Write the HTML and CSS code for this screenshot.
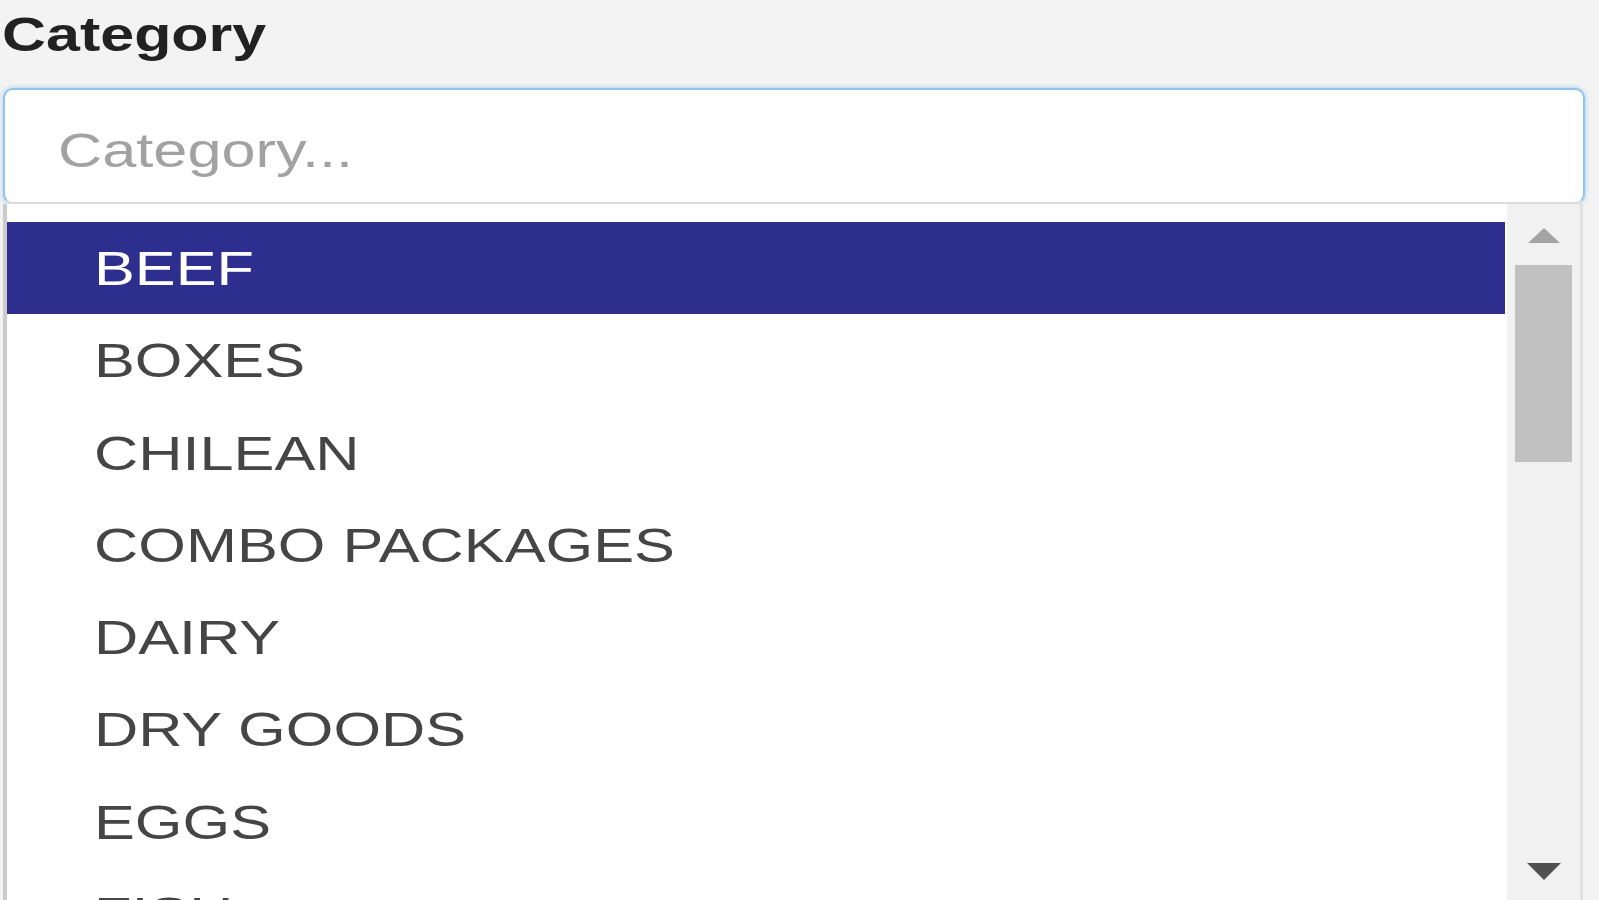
FILE: index.html
```html
<!DOCTYPE html>
<html lang="en">
<head>
<meta charset="utf-8">
<title>Category</title>
<link rel="stylesheet" href="styles.css">
</head>
<body>
<div class="field">
  <div class="label"><span class="stretch-bold">Category</span></div>
  <div class="control"><span class="stretch placeholder">Category...</span></div>
  <div class="dropdown">
    <ul class="options">
      <li class="option active"><span class="stretch">BEEF</span></li>
      <li class="option"><span class="stretch">BOXES</span></li>
      <li class="option"><span class="stretch">CHILEAN</span></li>
      <li class="option"><span class="stretch">COMBO PACKAGES</span></li>
      <li class="option"><span class="stretch">DAIRY</span></li>
      <li class="option"><span class="stretch">DRY GOODS</span></li>
      <li class="option"><span class="stretch">EGGS</span></li>
      <li class="option"><span class="stretch">FISH</span></li>
    </ul>
    <div class="scrollbar">
      <div class="arrow-up"></div>
      <div class="thumb"></div>
      <div class="spacer"></div>
      <div class="arrow-down"></div>
    </div>
  </div>
</div>
</body>
</html>
```

FILE: styles.css
```css
html, body {
  margin: 0;
  padding: 0;
  background: #f3f3f3;
  overflow: hidden;
  height: 900px;
}

.field {
  font-family: "Liberation Sans", Arial, sans-serif;
}

.stretch,
.stretch-bold {
  display: inline-block;
  transform: scaleX(1.25);
  transform-origin: 0 50%;
  white-space: nowrap;
}

.stretch-bold {
  transform: scaleX(1.27);
}

.label {
  font-size: 48px;
  font-weight: bold;
  line-height: 70px;
  color: #222;
  padding-left: 2px;
  height: 70px;
  margin-bottom: 18px;
}

.control {
  margin-left: 3px;
  width: 1525px;
  height: 104px;
  padding-top: 8px;
  padding-left: 53px;
  border: 2px solid #8ec4ef;
  border-bottom-color: #dcdcdc;
  border-radius: 10px;
  background: #fff;
  box-shadow: 0 0 5px rgba(102, 175, 233, 0.6);
  font-size: 49px;
  line-height: 104px;
}

.placeholder {
  color: #a2a2a2;
}

.dropdown {
  display: flex;
  margin-left: 3px;
  width: 1580px;
  height: 696px;
  border-left: 4px solid #cbcbcb;
  border-right: 3px solid #e0e0e0;
  box-sizing: border-box;
  background: #fff;
}

.options {
  list-style: none;
  margin: 0;
  padding: 18px 0 0 0;
  flex: 1;
  overflow: hidden;
}

.option {
  height: 92.3px;
  line-height: 92.3px;
  padding-left: 87px;
  margin-right: 2px;
  font-size: 49px;
  color: #454545;
}

.option.active {
  background: #2e2e8f;
  color: #fff;
}

.scrollbar {
  width: 73px;
  background: #f1f1f1;
  display: flex;
  flex-direction: column;
  align-items: center;
}

.arrow-up {
  margin-top: 24px;
  width: 0;
  height: 0;
  border-left: 16px solid transparent;
  border-right: 16px solid transparent;
  border-bottom: 15px solid #a3a3a3;
}

.thumb {
  margin-top: 22px;
  width: 57px;
  height: 197px;
  background: #c1c1c1;
}

.spacer {
  flex: 1;
}

.arrow-down {
  margin-bottom: 20px;
  width: 0;
  height: 0;
  border-left: 17px solid transparent;
  border-right: 17px solid transparent;
  border-top: 17px solid #505050;
}
```
